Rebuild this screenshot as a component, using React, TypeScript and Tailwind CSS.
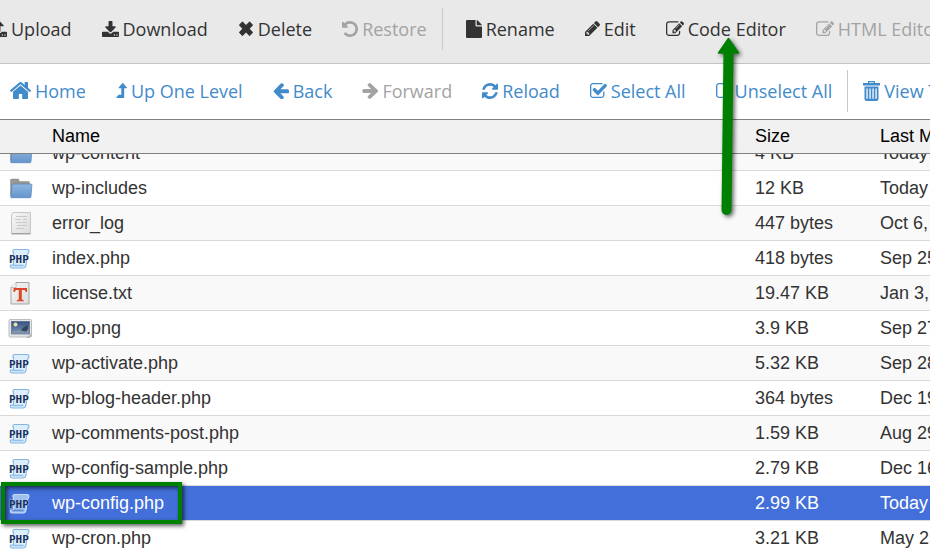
import type { ReactNode } from "react";

type IconName =
  | "upload" | "download" | "remove" | "undo" | "file" | "pencil" | "edit"
  | "home" | "levelUp" | "left" | "right" | "refresh" | "check" | "square" | "trash";

const DOWNLOAD_TRAY =
  "M1344 1344q0-26-19-45t-45-19-45 19-19 45 19 45 45 19 45-19 19-45zm256 0q0-26-19-45t-45-19-45 19-19 45 19 45 45 19 45-19 19-45zm128-224v320q0 40-28 68t-68 28h-1472q-40 0-68-28t-28-68v-320q0-40 28-68t68-28h465l135 136q58 56 136 56t136-56l136-136h464q40 0 68 28t28 68z";

const icons: Record<IconName, { box: string; size: string; d: string }> = {
  upload: {
    box: "64 0 1664 1536",
    size: "w-[17px] h-4",
    d: "M1344 1344q0-26-19-45t-45-19-45 19-19 45 19 45 45 19 45-19 19-45zm256 0q0-26-19-45t-45-19-45 19-19 45 19 45 45 19 45-19 19-45zm128-224v320q0 40-28 68t-68 28h-1472q-40 0-68-28t-28-68v-320q0-40 28-68t68-28h427q21 56 70.500 92t110.500 36h256q61 0 110.500-36t70.500-92h427q40 0 68 28t28 68zm-325-648q-17 40-59 40h-256v448q0 26-19 45t-45 19h-256q-26 0-45-19t-19-45v-448h-256q-42 0-59-40-17-39 14-69l448-448q18-19 45-19t45 19l448 448q31 30 14 69z",
  },
  download: {
    box: "64 0 1664 1536",
    size: "w-[17px] h-4",
    d: DOWNLOAD_TRAY + "m-325-569q17 41-14 70l-448 448q-18 19-45 19t-45-19l-448-448q-31-29-14-70 17-39 59-39h256v-448q0-26 19-45t45-19h256q26 0 45 19t19 45v448h256q42 0 59 39z",
  },
  remove: {
    box: "0 0 16 16",
    size: "w-4 h-4",
    d: "M1.200 3.700 4 .8q.4-.4.8 0L8 4l3.200-3.200q.4-.4.8 0l2.800 2.900q.4.4 0 .8L11.700 7.800l3.100 3.200q.4.4 0 .8L12 14.700q-.4.4-.8 0L8 11.500l-3.200 3.200q-.4.4-.8 0l-2.800-2.900q-.4-.4 0-.8l3.100-3.200-3.100-3.300q-.4-.4 0-.8z",
  },
  undo: {
    box: "128 128 1536 1536",
    size: "w-4 h-4",
    d: "M1664 896q0 156-61 298t-164 245-245 164-298 61q-172 0-327-72.500t-264-204.500q-7-10-6.500-22.500t8.500-20.500l137-138q10-9 25-9 16 2 23 12 73 95 179 147t225 52q104 0 198.500-40.500t163.500-109.500 109.500-163.500 40.500-198.500-40.500-198.500-109.500-163.500-163.500-109.500-198.500-40.500q-98 0-188 35.500t-160 101.500l137 138q31 30 14 69-17 40-59 40h-448q-26 0-45-19t-19-45v-448q0-42 40-59 39-17 69 14l130 129q107-101 244.500-156.500t284.500-55.500q156 0 298 61t245 164 164 245 61 298z",
  },
  file: {
    box: "0 0 16 18",
    size: "w-4 h-[18px]",
    d: "M1 0h8.500v5.200q0 1.300 1.300 1.300H16V17q0 1-1 1H1q-1 0-1-1V1q0-1 1-1zM10.700 0q.6.200 1 .6l3.700 3.700q.4.4.6 1h-5.300z",
  },
  pencil: {
    box: "128 149 1516 1515",
    size: "w-[15px] h-[15px]",
    d: "M491 1536l91-91-235-235-91 91v107h128v128h107zm523-928q0-22-22-22-10 0-17 7l-542 542q-7 7-7 17 0 22 22 22 10 0 17-7l542-542q7-7 7-17zm-54-192l416 416-832 832h-416v-416zm683 96q0 53-37 90l-166 166-416-416 166-165q36-38 90-38 53 0 91 38l235 234q37 39 37 91z",
  },
  edit: {
    box: "0 116 1784 1420",
    size: "w-[18px] h-[15px]",
    d: "M888 1184l116-116-152-152-116 116v56h96v96h56zm440-720q-16-16-33 1l-350 350q-17 17-1 33t33-1l350-350q17-17 1-33zm80 594v190q0 119-84.500 203.500t-203.500 84.500h-832q-119 0-203.500-84.500t-84.500-203.500v-832q0-119 84.500-203.500t203.500-84.500h832q63 0 117 25 15 7 18 23 3 17-9 29l-49 49q-14 14-32 8-23-6-45-6h-832q-66 0-113 47t-47 113v832q0 66 47 113t113 47h832q66 0 113-47t47-113v-126q0-13 9-22l64-64q15-15 35-7t20 29zm-96-738l288 288-672 672h-288v-288zm444 132l-92 92-288-288 92-92q28-28 68-28t68 28l152 152q28 28 28 68t-28 68z",
  },
  home: {
    box: "89 253 1614 1283",
    size: "w-[21px] h-[17px]",
    d: "M1472 992v480q0 26-19 45t-45 19h-384v-384h-256v384h-384q-26 0-45-19t-19-45v-480q0-1 .5-3t.5-3l575-474 575 474q1 2 1 6zm223-69l-62 74q-8 9-21 11h-3q-13 0-21-7l-692-577-692 577q-12 8-24 7-13-2-21-11l-62-74q-8-10-7-23.500t11-21.500l719-599q32-26 76-26t76 26l244 204v-195q0-14 9-23t23-9h192q14 0 23 9t9 23v408l219 182q10 8 11 21.500t-7 23.500z",
  },
  levelUp: {
    box: "0 0 11 15",
    size: "w-[11px] h-[15px]",
    d: "M.3 14.600 2.400 12q.2-.2.500-.2h2.400V5.300H3.100q-.9 0-.4-.8L6.300.3q.5-.5 1 0l3.500 4.200q.5.8-.4.8H8.200v9q0 .6-.6.6H.5q-.5 0-.2-.3z",
  },
  left: {
    box: "128 165 1536 1526",
    size: "w-4 h-4",
    d: "M1664 896v128q0 53-32.500 90.500t-84.500 37.500h-704l293 294q38 36 38 90t-38 90l-75 76q-37 37-90 37-52 0-91-37l-651-652q-37-37-37-90 0-52 37-91l651-650q38-38 91-38 52 0 90 38l75 74q38 38 38 91t-38 91l-293 293h704q52 0 84.500 37.500t32.500 90.500z",
  },
  right: {
    box: "90 182 1510 1557",
    size: "w-4 h-4",
    d: "M1600 960q0 54-37 91l-651 651q-39 37-91 37-51 0-90-37l-75-75q-38-38-38-91t38-91l293-293h-704q-52 0-84.500-37.500t-32.500-90.500v-128q0-53 32.500-90.500t84.500-37.500h704l-293-294q-38-36-38-90t38-90l75-75q38-38 90-38 53 0 91 38l651 651q37 35 37 90z",
  },
  refresh: {
    box: "128 128 1536 1536",
    size: "w-4 h-4",
    d: "M1639 1056q0 5-1 7-64 268-268 434.500t-478 166.500q-146 0-282.500-55t-243.500-157l-129 129q-19 19-45 19t-45-19-19-45v-448q0-26 19-45t45-19h448q26 0 45 19t19 45-19 45l-137 137q71 66 161 102t187 36q134 0 250-65t186-179q11-17 53-117 8-23 30-23h192q13 0 22.500 9.500t9.500 22.500zm25-800v448q0 26-19 45t-45 19h-448q-26 0-45-19t-19-45 19-45l138-138q-148-137-349-137-134 0-250 65t-186 179q-11 17-53 117-8 23-30 23h-199q-13 0-22.500-9.500t-9.500-22.500v-7q65-268 270-434.500t480-166.500q146 0 284 55.500t245 156.500l130-129q19-19 45-19t45 19 19 45z",
  },
  check: {
    box: "64 128 1664 1408",
    size: "w-[17px] h-[15px]",
    d: "M1472 930v318q0 119-84.500 203.500t-203.500 84.500h-832q-119 0-203.500-84.500t-84.500-203.500v-832q0-119 84.500-203.500t203.500-84.500h832q63 0 117 25 15 7 18 23 3 17-9 29l-49 49q-10 10-23 10-3 0-9-2-23-6-45-6h-832q-66 0-113 47t-47 113v832q0 66 47 113t113 47h832q66 0 113-47t47-113v-254q0-13 9-22l64-64q10-10 23-10 6 0 12 3 20 8 20 29zm231-489l-814 814q-24 24-57 24t-57-24l-430-430q-24-24-24-57t24-57l110-110q24-24 57-24t57 24l263 263 647-647q24-24 57-24t57 24l110 110q24 24 24 57t-24 57z",
  },
  square: {
    box: "192 128 1408 1408",
    size: "w-[15px] h-[15px]",
    d: "M1312 256h-832q-66 0-113 47t-47 113v832q0 66 47 113t113 47h832q66 0 113-47t47-113v-832q0-66-47-113t-113-47zm288 160v832q0 119-84.500 203.500t-203.500 84.500h-832q-119 0-203.500-84.500t-84.500-203.500v-832q0-119 84.500-203.500t203.500-84.500h832q119 0 203.500 84.500t84.500 203.500z",
  },
  trash: {
    box: "0 0 17 20",
    size: "w-[17px] h-5",
    d: "M5 0h7v2h5v2.500H0V2h5zM6.300 1.200V2h4.400v-.8zM1.500 5.500h14V18q0 2-2 2h-10q-2 0-2-2zM3.400 7.500v10.300h1.300V7.500zm3 0v10.300h1.300V7.500zm3 0v10.300h1.300V7.500zm3 0v10.300h1.300V7.500z",
  },
};

function Icon({ name }: { name: IconName }) {
  const { box, size, d } = icons[name];
  return (
    <svg viewBox={box} preserveAspectRatio="none" className={`${size} shrink-0`} fill="currentColor" fillRule={name === "trash" ? "evenodd" : "nonzero"} aria-hidden="true">
      <path d={d} />
    </svg>
  );
}

function Tool({ icon, children, disabled }: { icon: IconName; children: ReactNode; disabled?: boolean }) {
  return (
    <button type="button" disabled={disabled} className="flex shrink-0 items-center gap-1 px-[15px] whitespace-nowrap disabled:text-[#a3a3a3]">
      <Icon name={icon} />
      {children}
    </button>
  );
}

type Kind = "folder" | "log" | "php" | "text" | "image";

function FileIcon({ kind, selected }: { kind: Kind; selected?: boolean }) {
  return (
    <svg viewBox="0 0 24 24" className="ml-2 block h-6 w-6 overflow-visible" aria-hidden="true">
      {kind === "folder" && (
        <>
          <path d="M2.500 19V4q0-1 1-1h6.500q1 0 1 1v1.500h9.500q1 0 1 1V19z" fill="#989892" stroke="#8a8a84" strokeWidth=".5" />
          <path d="M5 8h18q1 0 .9 1L23 20.500q-.1 1.200-1.200 1.200H3.500q-1 0-.8-1L4 9q.1-1 1-1z" fill="url(#folderBlue)" stroke="#5583b8" strokeWidth=".7" />
        </>
      )}
      {kind === "log" && (
        <>
          <path d="M5 1.500h17.500v21H3.500V4z" fill="url(#paper)" stroke="#c6c6c4" />
          <path d="M3.500 22.800h19" stroke="#999" strokeWidth="1.200" />
          <path d="M8 5.500h11M7 8.500h6m2 0h4M8 11.500h11M9 14.500h10M8 17.500h8" stroke="#cacaca" strokeWidth="1.200" />
        </>
      )}
      {kind === "text" && (
        <>
          <path d="M8 1.500h13v21.500H3V6.500z" fill="url(#paper)" stroke="#a5a5a5" />
          <path d="M8 1.500v5H3" fill="#fafafa" stroke="#aaa" strokeWidth=".7" />
          <path d="M5.500 7H19v4h-1.200l-1-2h-3v9.500l2 .7v1H8.800v-1l2-.7V9h-3l-1 2H5.500z" fill="#dc4526" />
        </>
      )}
      {kind === "image" && (
        <>
          <rect x="1" y="3.500" width="22.500" height="17.500" rx="1" fill="#e6e6e6" stroke="#bcbcbc" />
          <rect x="3.500" y="5.500" width="18" height="12.500" fill="url(#sky)" stroke="#465c80" strokeWidth=".6" />
          <circle cx="7.500" cy="8.500" r="2" fill="#e4e4b0" />
          <path d="M4 17.500v-2q8-3 17-1v3z" fill="#7e93ad" />
          <path d="M13 14q2-3 4-3.500l2.500-2 .5 4.500-2 2.500-5-1z" fill="#34465f" />
          <path d="m18 22 6-5.500V20l-3 2z" fill="#b8b8b8" />
        </>
      )}
      {kind === "php" && (
        <>
          <path d="M6.500 3.500h12.500q2.500.3 1.800 2.500l-1.500 3-1.300 10q-.5 3-3 3H4.500q-2.800-.3-2-3h3L5.500 7q-1.500-3 1-3.500z" fill={selected ? "#9fc0ef" : "#dceefc"} stroke={selected ? "#c9ddfa" : "#86b6df"} strokeWidth="1.200" />
          <path d="M4.500 19.500h11" stroke={selected ? "#5a86cc" : "#8fc2ec"} strokeWidth="1.600" />
          <text x="1" y="16.500" fontSize="11" fontWeight="700" fill="#14305c" stroke={selected ? "#a9c6f0" : "#e6f2fd"} strokeWidth="1" paintOrder="stroke" className="font-['DejaVu_Sans_Mono',monospace]">PHP</text>
        </>
      )}
    </svg>
  );
}

const files: { name: string; kind: Kind; size: string; modified: string; selected?: boolean }[] = [
  { name: "wp-content", kind: "folder", size: "4 KB", modified: "Today" },
  { name: "wp-includes", kind: "folder", size: "12 KB", modified: "Today" },
  { name: "error_log", kind: "log", size: "447 bytes", modified: "Oct 6," },
  { name: "index.php", kind: "php", size: "418 bytes", modified: "Sep 25" },
  { name: "license.txt", kind: "text", size: "19.47 KB", modified: "Jan 3," },
  { name: "logo.png", kind: "image", size: "3.9 KB", modified: "Sep 27" },
  { name: "wp-activate.php", kind: "php", size: "5.32 KB", modified: "Sep 28" },
  { name: "wp-blog-header.php", kind: "php", size: "364 bytes", modified: "Dec 19" },
  { name: "wp-comments-post.php", kind: "php", size: "1.59 KB", modified: "Aug 29" },
  { name: "wp-config-sample.php", kind: "php", size: "2.79 KB", modified: "Dec 16" },
  { name: "wp-config.php", kind: "php", size: "2.99 KB", modified: "Today", selected: true },
  { name: "wp-cron.php", kind: "php", size: "3.21 KB", modified: "May 25" },
];

function Columns() {
  return (
    <colgroup>
      <col className="w-[52px]" />
      <col />
      <col className="w-[125px]" />
      <col className="w-[50px]" />
    </colgroup>
  );
}

export default function App() {
  return (
    <main className="relative flex h-screen flex-col overflow-hidden bg-white font-['Liberation_Sans',Arial,sans-serif] text-lg text-[#333]">
      <svg className="absolute h-0 w-0" aria-hidden="true">
        <defs>
          <linearGradient id="folderBlue" x2="0" y2="1"><stop stopColor="#8fb5de" /><stop offset="1" stopColor="#6396cc" /></linearGradient>
          <linearGradient id="paper" x2="1" y2="1"><stop stopColor="#f6f6f6" /><stop offset="1" stopColor="#dcdcdc" /></linearGradient>
          <linearGradient id="sky" x2="0" y2="1"><stop stopColor="#38527e" /><stop offset="1" stopColor="#7d98bd" /></linearGradient>
        </defs>
      </svg>

      <div role="toolbar" aria-label="File actions" className="flex h-16 shrink-0 items-center border-b border-[#c4c4c4] bg-[#e9e9e9] pb-1.5 font-['Open_Sans',sans-serif]">
        <div className="-ml-[25px] flex items-center">
          <Tool icon="upload">Upload</Tool>
          <Tool icon="download">Download</Tool>
          <Tool icon="remove">Delete</Tool>
          <Tool icon="undo" disabled>Restore</Tool>
          <span className="mr-2 h-[42px] w-px shrink-0 bg-[#c9c9c9]" />
          <Tool icon="file">Rename</Tool>
          <Tool icon="pencil">Edit</Tool>
          <Tool icon="edit">Code Editor</Tool>
          <Tool icon="edit" disabled>HTML Editor</Tool>
        </div>
      </div>

      <div role="toolbar" aria-label="Navigation" className="flex h-14 shrink-0 items-center border-b border-[#808080] pb-0.5 font-['Open_Sans',sans-serif] text-[#428bca]">
        <div className="-ml-[5px] flex items-center">
          <Tool icon="home">Home</Tool>
          <Tool icon="levelUp">Up One Level</Tool>
          <Tool icon="left">Back</Tool>
          <Tool icon="right" disabled>Forward</Tool>
          <Tool icon="refresh">Reload</Tool>
          <Tool icon="check">Select All</Tool>
          <Tool icon="square">Unselect All</Tool>
          <span className="h-[42px] w-px shrink-0 bg-[#c9c9c9]" />
          <Tool icon="trash">View Trash</Tool>
        </div>
      </div>

      <table className="w-full shrink-0 table-fixed border-b border-[#808080] bg-[#f1f1f1] text-black">
        <Columns />
        <thead>
          <tr className="h-[33px] text-left whitespace-nowrap">
            <th aria-label="Type" />
            <th className="font-normal">Name</th>
            <th className="font-normal">Size</th>
            <th className="font-normal">Last Modified</th>
          </tr>
        </thead>
      </table>

      <div className="min-h-0 flex-1 overflow-hidden">
        <table className="-mt-[18px] w-full table-fixed" aria-label="Files">
          <Columns />
          <tbody>
            {files.map((f) => (
              <tr key={f.name} aria-selected={!!f.selected} className="h-[35px] border-b border-[#d9d9d9] whitespace-nowrap odd:bg-[#f9f9f9] aria-selected:bg-[#426fd9] aria-selected:text-white">
                <td><FileIcon kind={f.kind} selected={f.selected} /></td>
                <td>{f.name}</td>
                <td>{f.size}</td>
                <td className="overflow-hidden">{f.modified}</td>
              </tr>
            ))}
          </tbody>
        </table>
      </div>

      <div className="pointer-events-none absolute top-[482px] left-px h-[42px] w-[181px] border-4 border-[#008000] shadow-[2px_2px_4px_#000000a0,inset_2px_2px_4px_#000000a0]" />
      <svg viewBox="0 0 32 188" className="pointer-events-none absolute top-[34px] left-[712px] h-[188px] w-8 overflow-visible drop-shadow-[2px_2px_2px_#00000099]" aria-hidden="true">
        <path d="M16.500 4.500 26.500 19H6.500z" fill="#008000" stroke="#008000" strokeWidth="1.500" strokeLinejoin="round" />
        <path d="M16.500 17 14.500 176" stroke="#008000" strokeWidth="10" strokeLinecap="round" />
      </svg>
    </main>
  );
}
